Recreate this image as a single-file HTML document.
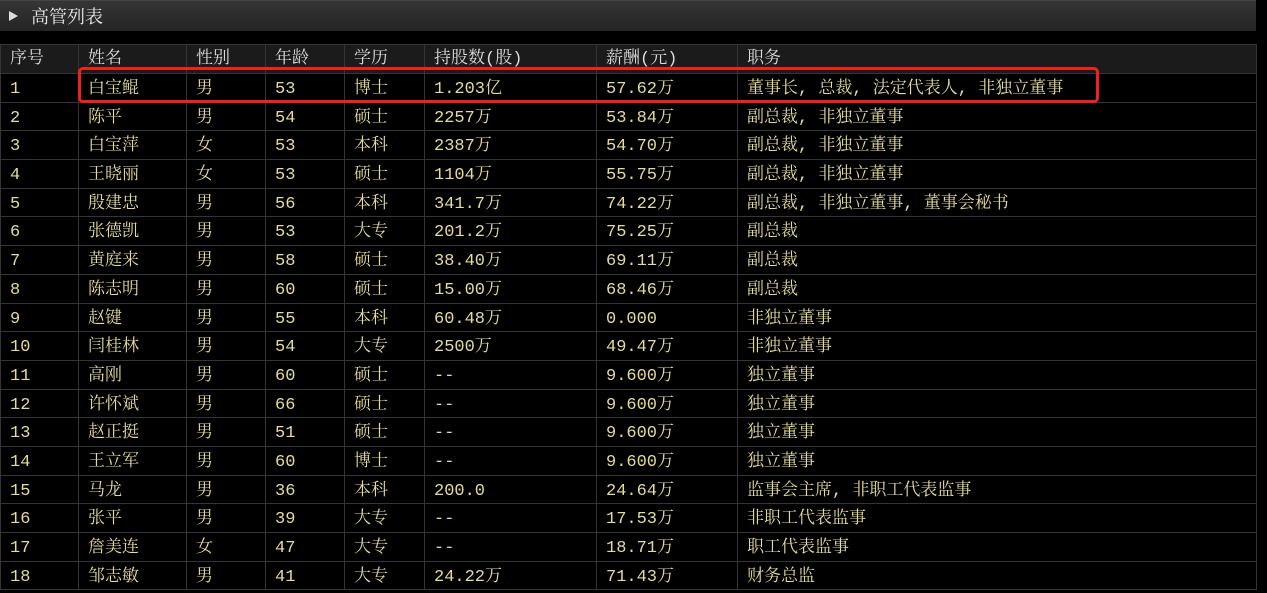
<!DOCTYPE html>
<html><head><meta charset="utf-8"><style>
*{margin:0;padding:0;box-sizing:border-box}
body{width:1267px;height:593px;background:#000;position:relative;overflow:hidden;font-family:"Liberation Mono","Noto Serif CJK SC",monospace}
.title{position:absolute;left:0;top:0;width:1256px;height:31px;background:linear-gradient(#353535,#242424);border-top:1px solid #444;color:#e6e6e6;font-family:"Noto Serif CJK SC","Noto Sans CJK SC",serif;font-size:18px;line-height:30px;padding-left:31px}
.title:before{content:"";position:absolute;left:9px;top:10px;border-left:9px solid #ddd;border-top:5px solid transparent;border-bottom:5px solid transparent}
table{position:absolute;left:0;top:44px;width:1256px;border-collapse:collapse;table-layout:fixed}
td,th{border:1px solid #353535;height:28.7px;padding:5px 0 0 9px;text-align:left;font-weight:normal;font-size:17px;line-height:22px;vertical-align:top;color:#e4dc98;white-space:nowrap;overflow:hidden;font-family:"Liberation Mono","Noto Serif CJK SC",monospace}
th{background:#1b1b1b;color:#dcdcdc;height:29px;font-size:17px;padding-top:4px}
.box{position:absolute;left:78px;top:67px;width:1021px;height:36px;border:3px solid #f0201c;border-radius:5px}
</style></head><body>
<div class="title">高管列表</div>
<table>
<colgroup><col style="width:78px"><col style="width:108px"><col style="width:79px"><col style="width:79px"><col style="width:80px"><col style="width:172px"><col style="width:141px"><col style="width:519px"></colgroup>
<tr><th>序号</th><th>姓名</th><th>性别</th><th>年龄</th><th>学历</th><th>持股数(股)</th><th>薪酬(元)</th><th>职务</th></tr>
<tr><td>1</td><td>白宝鲲</td><td>男</td><td>53</td><td>博士</td><td>1.203亿</td><td>57.62万</td><td>董事长, 总裁, 法定代表人, 非独立董事</td></tr>
<tr><td>2</td><td>陈平</td><td>男</td><td>54</td><td>硕士</td><td>2257万</td><td>53.84万</td><td>副总裁, 非独立董事</td></tr>
<tr><td>3</td><td>白宝萍</td><td>女</td><td>53</td><td>本科</td><td>2387万</td><td>54.70万</td><td>副总裁, 非独立董事</td></tr>
<tr><td>4</td><td>王晓丽</td><td>女</td><td>53</td><td>硕士</td><td>1104万</td><td>55.75万</td><td>副总裁, 非独立董事</td></tr>
<tr><td>5</td><td>殷建忠</td><td>男</td><td>56</td><td>本科</td><td>341.7万</td><td>74.22万</td><td>副总裁, 非独立董事, 董事会秘书</td></tr>
<tr><td>6</td><td>张德凯</td><td>男</td><td>53</td><td>大专</td><td>201.2万</td><td>75.25万</td><td>副总裁</td></tr>
<tr><td>7</td><td>黄庭来</td><td>男</td><td>58</td><td>硕士</td><td>38.40万</td><td>69.11万</td><td>副总裁</td></tr>
<tr><td>8</td><td>陈志明</td><td>男</td><td>60</td><td>硕士</td><td>15.00万</td><td>68.46万</td><td>副总裁</td></tr>
<tr><td>9</td><td>赵键</td><td>男</td><td>55</td><td>本科</td><td>60.48万</td><td>0.000</td><td>非独立董事</td></tr>
<tr><td>10</td><td>闫桂林</td><td>男</td><td>54</td><td>大专</td><td>2500万</td><td>49.47万</td><td>非独立董事</td></tr>
<tr><td>11</td><td>高刚</td><td>男</td><td>60</td><td>硕士</td><td>--</td><td>9.600万</td><td>独立董事</td></tr>
<tr><td>12</td><td>许怀斌</td><td>男</td><td>66</td><td>硕士</td><td>--</td><td>9.600万</td><td>独立董事</td></tr>
<tr><td>13</td><td>赵正挺</td><td>男</td><td>51</td><td>硕士</td><td>--</td><td>9.600万</td><td>独立董事</td></tr>
<tr><td>14</td><td>王立军</td><td>男</td><td>60</td><td>博士</td><td>--</td><td>9.600万</td><td>独立董事</td></tr>
<tr><td>15</td><td>马龙</td><td>男</td><td>36</td><td>本科</td><td>200.0</td><td>24.64万</td><td>监事会主席, 非职工代表监事</td></tr>
<tr><td>16</td><td>张平</td><td>男</td><td>39</td><td>大专</td><td>--</td><td>17.53万</td><td>非职工代表监事</td></tr>
<tr><td>17</td><td>詹美连</td><td>女</td><td>47</td><td>大专</td><td>--</td><td>18.71万</td><td>职工代表监事</td></tr>
<tr><td>18</td><td>邹志敏</td><td>男</td><td>41</td><td>大专</td><td>24.22万</td><td>71.43万</td><td>财务总监</td></tr>
</table>
<div class="box"></div>
</body></html>
